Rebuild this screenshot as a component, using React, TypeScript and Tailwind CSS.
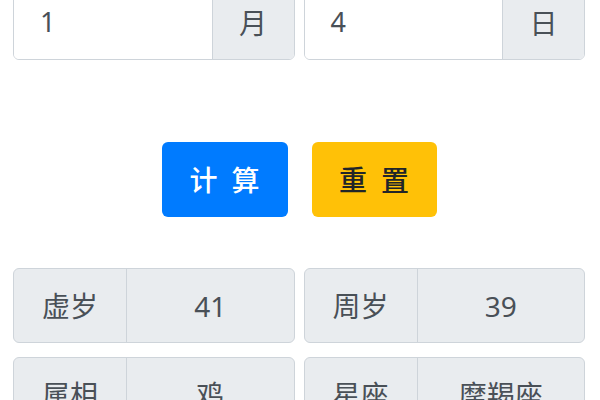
import React from 'react';

const font = { fontFamily: '"Noto Sans", "Noto Sans CJK SC", sans-serif' };

const DateInput = ({ value, unit }: { value: string; unit: string }) => (
    <div className="flex h-[75px] rounded-[6px] border border-[#ced4da] overflow-hidden">
        <div className="flex-1 bg-white flex items-center pl-[26px] text-[27px] text-[#495057]">{value}</div>
        <div className="w-[82px] bg-[#e9ecef] border-l border-[#ced4da] flex items-center justify-center text-[28px] text-[#495057]">
            {unit}
        </div>
    </div>
);

const Stat = ({ label, value }: { label: string; value: string }) => (
    <div className="flex h-[75px] rounded-[6px] border border-[#ced4da] overflow-hidden bg-[#e9ecef] text-[28px] text-[#495057]">
        <div className="w-[113px] flex items-center justify-center border-r border-[#ced4da]">{label}</div>
        <div className="flex-1 flex items-center justify-center">{value}</div>
    </div>
);

export default function App() {
    return (
        <div className="w-[600px] h-[400px] overflow-hidden bg-white" style={font}>
            <div className="pl-[13px] pr-[15px] mt-[-15px] grid grid-cols-2 gap-x-[9px]">
                <DateInput value="1" unit="月" />
                <DateInput value="4" unit="日" />
            </div>

            <div className="flex justify-center gap-[24px] mt-[82px] pr-[2px]">
                <button className="w-[126px] h-[75px] rounded-[6px] bg-[#007bff] text-white text-[28px] font-medium tracking-[14px] pl-[14px]">
                    计算
                </button>
                <button className="w-[125px] h-[75px] rounded-[6px] bg-[#ffc107] text-[#212529] text-[28px] font-medium tracking-[14px] pl-[14px]">
                    重置
                </button>
            </div>

            <div className="pl-[13px] pr-[15px] mt-[51px] grid grid-cols-2 gap-x-[9px] gap-y-[14px]">
                <Stat label="虚岁" value="41" />
                <Stat label="周岁" value="39" />
                <Stat label="属相" value="鸡" />
                <Stat label="星座" value="摩羯座" />
            </div>
        </div>
    );
}
